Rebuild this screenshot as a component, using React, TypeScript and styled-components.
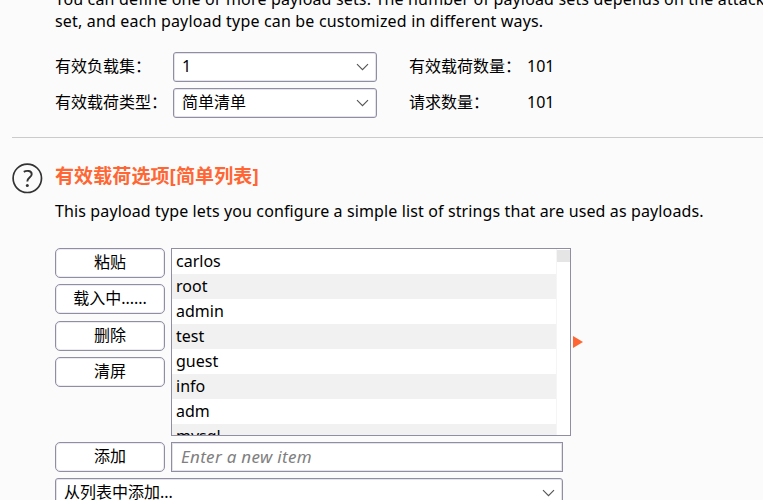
import React from "react";
import styled, { createGlobalStyle } from "styled-components";

const GlobalStyle = createGlobalStyle`
  * { box-sizing: border-box; }
  html, body { margin: 0; height: 100%; overflow: hidden; background: #fbfbfb; }
`;

const Page = styled.main`
  width: 763px;
  height: 500px;
  overflow: hidden;
  background: #fbfbfb;
  color: #000;
  font: 16px/22px "Noto Sans", "Noto Sans CJK SC", sans-serif;
  white-space: nowrap;
`;

const SetsSection = styled.section`
  height: 137px;
  padding-left: 55px;
  overflow: hidden;
`;

const Intro = styled.div`
  margin-top: -12px;
`;

const Line = styled.p<{ $spacing?: number }>`
  margin: 0;
  height: 22px;
  letter-spacing: ${(p) => p.$spacing ?? 0}px;
`;

const SetsGrid = styled.div`
  display: grid;
  grid-template-columns: 118px 204px 150px auto;
  grid-template-rows: 30px 30px;
  row-gap: 6px;
  margin-top: 20px;
`;

const Label = styled.span<{ $indent?: number }>`
  padding-left: ${(p) => p.$indent ?? 0}px;
  line-height: 29px;
`;

const Select = styled.div`
  display: flex;
  align-items: center;
  justify-content: space-between;
  height: 30px;
  padding: 0 7px 2px 8px;
  background: #fff;
  border: 1px solid #8f8ea3;
  border-radius: 3px;
  box-shadow: inset 0 0 0 1px #e4e3ea;
`;

const Chevron = styled.svg`
  display: block;
  width: 13px;
  height: 8px;
  margin-top: 2px;
`;

const Divider = styled.hr`
  height: 1px;
  margin: 0 0 0 12px;
  border: 0;
  background: #cbcbcb;
`;

const OptionsSection = styled.section`
  display: grid;
  grid-template-columns: 43px auto;
  padding: 24px 0 0 12px;
`;

const Help = styled.svg`
  width: 31px;
  height: 32px;
`;

const Title = styled.h2`
  margin: 1px 0 11px;
  height: 26px;
  color: #ff6633;
  font-size: 19px;
  font-weight: 700;
  line-height: 26px;
  letter-spacing: 0.1px;
`;

const ListArea = styled.div`
  display: flex;
  height: 188px;
  margin-top: 26px;
`;

const Buttons = styled.div`
  display: grid;
  grid-template-rows: 30px 31px 30px 30px;
  row-gap: 6px;
  width: 110px;
  margin-right: 6px;
`;

const Button = styled.button`
  width: 110px;
  height: 30px;
  padding: 0 0 2px;
  background: #fff;
  border: 1px solid #8f8ea3;
  border-radius: 5px;
  box-shadow: inset 0 0 0 1px #ecebf1;
  color: #000;
  font: inherit;
`;

const ListBox = styled.div`
  display: flex;
  width: 400px;
  border: 1px solid #8f8ea3;
  background: #fff;
  overflow: hidden;
`;

const Rows = styled.ul`
  width: 384px;
  margin: 0;
  padding: 0;
  list-style: none;
`;

const Row = styled.li`
  height: 25px;
  padding-left: 4px;
  line-height: 24px;
  &:nth-child(even) { background: #f1f1f1; }
`;

const ScrollTrack = styled.div`
  flex: 1;
  padding-top: 1px;
  border-left: 1px solid #f5f5f5;
  background: #fff;
`;

const ScrollThumb = styled.div`
  height: 12px;
  background: #e5e5e5;
`;

const Marker = styled.svg`
  width: 10px;
  height: 12px;
  margin: 88px 0 0 2px;
`;

const AddRow = styled.div`
  display: flex;
  gap: 6px;
  margin: 6px 0;
`;

const ItemInput = styled.input`
  width: 392px;
  height: 30px;
  padding: 0 9px 2px;
  border: 1px solid #8f8ea3;
  border-radius: 0;
  box-shadow: inset 0 0 0 1px #e4e3ea;
  background: #fff;
  font: inherit;
  font-size: 17px;
  letter-spacing: 0.3px;
  &::placeholder { color: #808080; font-style: italic; opacity: 1; }
`;

const WideSelect = styled(Select)`
  width: 508px;
`;

const DownArrow = () => (
  <Chevron viewBox="0 0 13 8">
    <path d="M1 1.2 6.5 6.7 12 1.2" fill="none" stroke="#555" strokeWidth="1.15" />
  </Chevron>
);

const payloads = ["carlos", "root", "admin", "test", "guest", "info", "adm", "mysql"];

export default function App() {
  return (
    <>
      <GlobalStyle />
      <Page>
        <SetsSection>
          <Intro>
            <Line $spacing={0.16}>You can define one or more payload sets. The number of payload sets depends on the attack</Line>
            <Line $spacing={0.175}>set, and each payload type can be customized in different ways.</Line>
          </Intro>
          <SetsGrid>
            <Label>有效负载集：</Label>
            <Select>1<DownArrow /></Select>
            <Label $indent={32}>有效载荷数量：</Label>
            <Label>101</Label>
            <Label>有效载荷类型：</Label>
            <Select>简单清单<DownArrow /></Select>
            <Label $indent={32}>请求数量：</Label>
            <Label>101</Label>
          </SetsGrid>
        </SetsSection>
        <Divider />
        <OptionsSection>
          <Help viewBox="0 0 31 32">
            <circle cx="15.3" cy="16.3" r="14.2" fill="none" stroke="#333" strokeWidth="1.7" />
            <path d="M11.8 9.9c2.8-1.8 7.9-1.3 7.9 2.3 0 3.3-4.7 3.4-4.4 7.3" fill="none" stroke="#333" strokeWidth="1.9" />
            <circle cx="15.3" cy="23.4" r="1.5" fill="#333" />
          </Help>
          <div>
            <Title>有效载荷选项[简单列表]</Title>
            <Line $spacing={0.12}>This payload type lets you configure a simple list of strings that are used as payloads.</Line>
            <ListArea>
              <Buttons>
                <Button>粘贴</Button>
                <Button>载入中......</Button>
                <Button>删除</Button>
                <Button>清屏</Button>
              </Buttons>
              <ListBox>
                <Rows>
                  {payloads.map((name) => <Row key={name}>{name}</Row>)}
                </Rows>
                <ScrollTrack><ScrollThumb /></ScrollTrack>
              </ListBox>
              <Marker viewBox="0 0 10 12"><path d="M0 0 10 6 0 12Z" fill="#ff6633" /></Marker>
            </ListArea>
            <AddRow>
              <Button>添加</Button>
              <ItemInput placeholder="Enter a new item" />
            </AddRow>
            <WideSelect>从列表中添加...<DownArrow /></WideSelect>
          </div>
        </OptionsSection>
      </Page>
    </>
  );
}
